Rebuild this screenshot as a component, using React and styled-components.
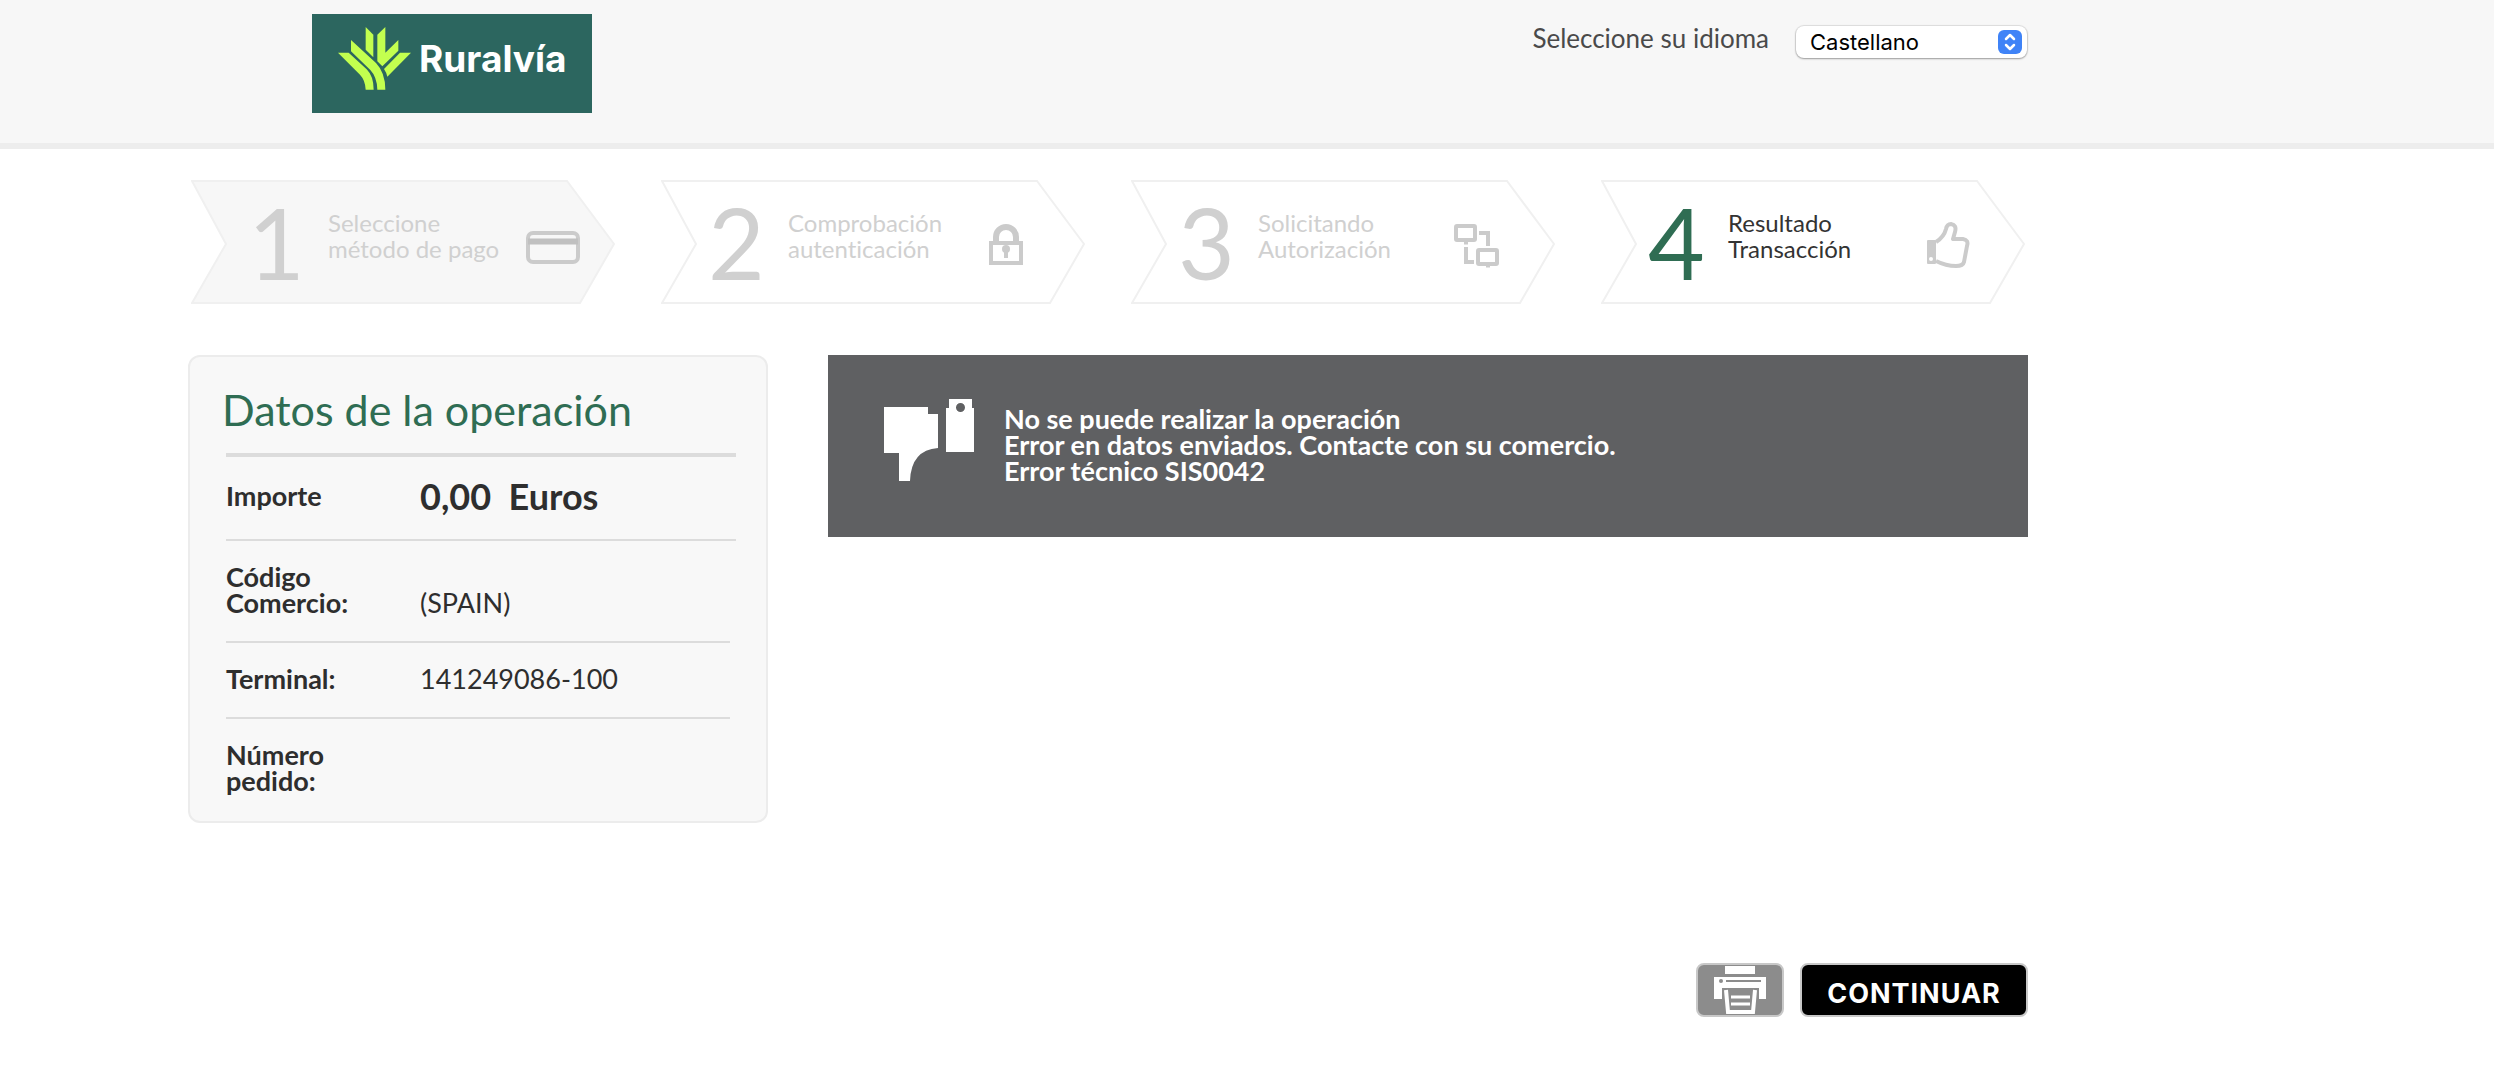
import React from "react";
import styled, { createGlobalStyle } from "styled-components";

const Global = createGlobalStyle`
  * { box-sizing: border-box; }
  body { margin: 0; background: #fff; color: #2e2e2e; font-family: Lato, "Liberation Sans", sans-serif; font-size: 27px; line-height: 26px; font-variant-ligatures: none; }
  h1, p, ol, dl, dd { margin: 0; padding: 0; }
`;

const Header = styled.header`
  background: #f7f7f7;
  border-bottom: 6px solid #ededed;
  padding: 14px 0 30px;
`;

const Container = styled.div`
  width: 100%;
  max-width: 2028px;
  padding-left: 188px;
`;

const HeaderRow = styled(Container)`
  display: flex;
  justify-content: space-between;
  align-items: flex-start;
`;

const Brand = styled.a`
  display: flex;
  align-items: center;
  gap: 7px;
  width: 280px;
  height: 99px;
  margin-left: 124px;
  padding: 0 0 10px 26px;
  background: #2c665f;
  color: #fff;
  font: 700 37px/44px Inter, "Liberation Sans", sans-serif;
  text-decoration: none;
`;

const Language = styled.div`
  display: flex;
  gap: 27px;
  padding: 12px 1px 0 0;
`;

const LanguageLabel = styled.label`
  color: #4a4a4a;
  font-size: 26px;
  line-height: 24px;
`;

const SelectBox = styled.span`
  display: grid;
  grid-template-columns: 1fr 24px;
  align-items: center;
  width: 231px;
  height: 32px;
  padding-right: 5px;
  background: #fff;
  border-radius: 8px;
  box-shadow: 0 0 1px 1px rgba(0, 0, 0, 0.1), 0 1px 2px rgba(0, 0, 0, 0.3);
  svg { grid-area: 1 / 2; pointer-events: none; }
`;

const Select = styled.select`
  grid-area: 1 / 1 / 2 / 3;
  appearance: none;
  width: 100%;
  height: 32px;
  padding: 0 32px 0 14px;
  border: 0;
  background: transparent;
  color: #000;
  font: 400 22px/32px Inter, "Liberation Sans", sans-serif;
`;

const Steps = styled.ol`
  display: grid;
  grid-template-columns: repeat(4, 1fr);
  gap: 46px;
  padding: 31px 3px 51px;
  list-style: none;
`;

const Step = styled.li`
  position: relative;
  display: grid;
  grid-template-columns: 80px 1fr 62px;
  height: 124px;
  padding: ${(p) => (p.$filled ? "0 26px 0 57px" : "0 34px 0 47px")};
  color: ${(p) => (p.$active ? "#333" : "#d0d0d0")};
  font-size: 24px;
`;

const StepShape = styled.svg`
  position: absolute;
  inset: 0;
  z-index: -1;
  width: 100%;
  height: 100%;
`;

const StepNumber = styled.span`
  color: ${(p) => (p.$active ? "#2f6d53" : "#d0d0d0")};
  font-size: 98px;
  line-height: 124px;
`;

const StepText = styled.span`
  padding-top: 30px;
  white-space: pre;
`;

const StepIcon = styled.svg`
  width: 56px;
  height: 48px;
  margin-top: 42px;
  fill: none;
  stroke: #cbcbcb;
  stroke-width: 4;
`;

const Content = styled.main`
  display: grid;
  grid-template-columns: 580px 1fr;
  column-gap: 60px;
  align-items: start;
`;

const Card = styled.section`
  padding: 26px 30px 2px 36px;
  border: 2px solid #ececec;
  border-radius: 12px;
  background: #f8f8f8;
`;

const CardTitle = styled.h1`
  padding-bottom: 16px;
  border-bottom: 4px solid #dcdcdc;
  color: #2f6d53;
  font-size: 43px;
  font-weight: 400;
  line-height: 54px;
  text-indent: -4px;
`;

const Row = styled.div`
  display: grid;
  grid-template-columns: 194px 1fr;
  align-items: end;
  margin-right: ${(p) => (p.$wide ? 0 : 6)}px;
  padding: ${(p) => (p.$wide ? "26px 0 30px" : "23px 0 25px")};
  border-bottom: 2px solid #dcdcdc;
  &:last-child { border-bottom: 0; }
`;

const Term = styled.dt`
  width: 130px;
  font-weight: 700;
`;

const Value = styled.dd`
  font-size: ${(p) => (p.$large ? 36 : 27)}px;
  font-weight: ${(p) => (p.$large ? 700 : 400)};
  white-space: pre-wrap;
`;

const Alert = styled.section`
  display: flex;
  gap: 30px;
  padding: 44px 56px 53px;
  background: #5f6062;
  color: #fff;
  font-weight: 700;
  p { padding-top: 7px; }
  svg { flex: none; }
`;

const Actions = styled.footer`
  display: flex;
  justify-content: flex-end;
  gap: 16px;
  padding: 140px 0 69px;
`;

const Button = styled.button`
  display: flex;
  align-items: center;
  justify-content: center;
  width: ${(p) => (p.$icon ? 88 : 228)}px;
  height: 54px;
  padding: ${(p) => (p.$icon ? 0 : "8px 0 0")};
  border: 2px solid #c8c8c8;
  border-radius: 8px;
  background: ${(p) => (p.$icon ? "#8c8c8c" : "#000")};
  color: #fff;
  font: 700 27px/32px Inter, "Liberation Sans", sans-serif;
  letter-spacing: 1px;
`;

const icons = {
  card: (
    <>
      <rect x="1" y="11" width="50" height="29" rx="5" />
      <path d="M1 19.500H51" stroke="#c0c0c0" strokeWidth="6" />
    </>
  ),
  lock: (
    <>
      <path d="M7 21V15a10 10 0 0 1 20 0V21" strokeWidth="6" />
      <rect x="2" y="21" width="30" height="20" />
      <circle cx="17" cy="27" r="4" fill="#cbcbcb" stroke="none" />
      <path d="M17 29V36" />
    </>
  ),
  network: (
    <>
      <rect x="-1" y="4" width="19" height="14" rx="1" />
      <rect x="21" y="28" width="19" height="14" rx="1" />
      <path d="M22 11H31V24M9 25V40H17" />
      <path d="M7 21H11M29 44H33" strokeWidth="3" />
    </>
  ),
  thumb: (
    <>
      <rect x="-2" y="18" width="9" height="24" rx="1" fill="#cbcbcb" stroke="none" />
      <circle cx="2" cy="37" r="2" fill="#fff" stroke="none" />
      <path d="M7 20Q15 15 17 7Q18 2 22 2Q28 3 26 10L24 17H34Q40 18 38 24L35 40Q34 44 27 44Q17 44 7 39" strokeLinejoin="round" />
    </>
  ),
};

const steps = [
  { text: "Seleccione\nmétodo de pago", icon: "card", filled: true, box: "0 0 56 48" },
  { text: "Comprobación\nautenticación", icon: "lock", box: "0 0 56 48" },
  { text: "Solicitando\nAutorización", icon: "network", box: "2 0 56 48" },
  { text: "Resultado\nTransacción", icon: "thumb", active: true, box: "0 0 56 48" },
];

export default function App() {
  return (
    <>
      <Global />
      <Header>
        <HeaderRow>
          <Brand href="#">
            <svg width="74" height="63" viewBox="115 82 222 189" fill="#c3ff4f" aria-hidden="true">
              <path d="M115 159H147L201 209Q222 230 222 270H198Q197 242 181 225Z" />
              <path d="M154 121L229 190Q257 219 257 270H233Q232 232 212 211L154 155Z" />
              <path d="M198 82L221 105V173L198 150Z" />
              <path d="M257 82V159L296 121V153L248 200L233 185V105Z" />
              <path d="M301 159H334L263 231Q260 218 253 208Z" />
            </svg>
            Ruralvía
          </Brand>
          <Language>
            <LanguageLabel htmlFor="language">Seleccione su idioma</LanguageLabel>
            <SelectBox>
              <Select id="language" defaultValue="es">
                <option value="es">Castellano</option>
              </Select>
              <svg width="24" height="24" viewBox="0 0 24 24" aria-hidden="true">
                <rect width="24" height="24" rx="6" fill="#3f83f7" />
                <path d="M8 9L12 5L16 9M8 15L12 19L16 15" fill="none" stroke="#fff" strokeWidth="2.500" strokeLinecap="round" strokeLinejoin="round" />
              </svg>
            </SelectBox>
          </Language>
        </HeaderRow>
      </Header>
      <Container>
        <Steps>
          {steps.map((s, i) => (
            <Step key={s.icon} $active={s.active} $filled={s.filled}>
              <StepShape viewBox="0 0 424 124" preserveAspectRatio="none" aria-hidden="true">
                <path d="M1 1H376L423 64L389 123H1L35 64Z" fill={s.filled ? "#f7f7f7" : "#fff"} stroke="#f0f0f0" strokeWidth="2" />
              </StepShape>
              <StepNumber $active={s.active}>{i + 1}</StepNumber>
              <StepText>{s.text}</StepText>
              <StepIcon viewBox={s.box} overflow="visible" aria-hidden="true">{icons[s.icon]}</StepIcon>
            </Step>
          ))}
        </Steps>
        <Content>
          <Card>
            <CardTitle>Datos de la operación</CardTitle>
            <dl>
              <Row $wide>
                <Term>Importe</Term>
                <Value $large>{"0,00  Euros"}</Value>
              </Row>
              <Row>
                <Term>Código Comercio:</Term>
                <Value>(SPAIN)</Value>
              </Row>
              <Row>
                <Term>Terminal:</Term>
                <Value>141249086-100</Value>
              </Row>
              <Row>
                <Term>Número pedido:</Term>
                <Value />
              </Row>
            </dl>
          </Card>
          <Alert role="alert">
            <svg width="90" height="82" viewBox="0 0 90 82" fill="#fff" aria-hidden="true">
              <path d="M0 8H44V15H54V49Q27 51 26 82H15V54H0Z" />
              <path fillRule="evenodd" d="M65 0H88V9H90V53H62V9H65ZM76.500 4A4.500 4.500 0 1 0 76.500 13A4.500 4.500 0 1 0 76.500 4Z" />
            </svg>
            <p>
              No se puede realizar la operación
              <br />
              Error en datos enviados. Contacte con su comercio.
              <br />
              Error técnico SIS0042
            </p>
          </Alert>
        </Content>
        <Actions>
          <Button type="button" $icon aria-label="Imprimir">
            <svg width="52" height="48" viewBox="0 0 52 48" fill="#fff" aria-hidden="true">
              <path d="M11 0H41V8H11Z" />
              <path d="M0 11H52V33H45V22H8V33H0Z" />
              <circle cx="7" cy="15" r="2" fill="#8c8c8c" />
              <path d="M12 15H47" stroke="#8c8c8c" strokeWidth="2" />
              <path d="M12 24L14 46H39L41 24" fill="#8c8c8c" stroke="#fff" strokeWidth="4" />
              <path d="M17 31H36M17 38H36" stroke="#fff" strokeWidth="3" />
            </svg>
          </Button>
          <Button type="button">CONTINUAR</Button>
        </Actions>
      </Container>
    </>
  );
}
